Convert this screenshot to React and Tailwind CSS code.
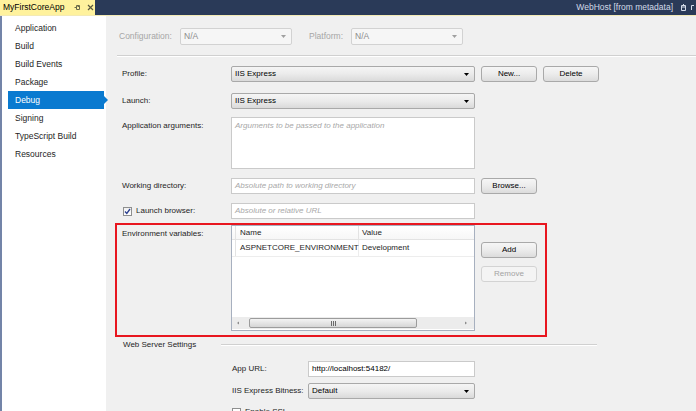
import React from "react";

function Caret({ gray }) {
  return (
    <svg width="5" height="3" viewBox="0 0 5 3" className="shrink-0">
      <path d="M0 0H5L2.5 3Z" fill={gray ? "#a0a0a0" : "#000"} />
    </svg>
  );
}

function Select({ text, w = "w-[244px]" }) {
  return (
    <div className={`${w} h-[16px] flex items-center justify-between rounded-[2px] border border-[#a9a9a9] bg-linear-to-b from-[#f5f5f5] via-[#ebebeb] to-[#dadada] pl-[3px] pr-[5px] text-[8px] text-black`}>
      <span>{text}</span>
      <Caret />
    </div>
  );
}

function DisSelect({ text }) {
  return (
    <div className="w-[112px] h-[17px] flex items-center justify-between rounded-[2px] border border-[#d2d2d2] bg-[#f6f6f6] pl-[3px] pr-[5px] text-[8.5px] text-[#8c8c8c]">
      <span>{text}</span>
      <Caret gray />
    </div>
  );
}

function Button({ children, disabled, className = "" }) {
  return (
    <div
      className={`w-[56px] h-[16px] flex items-center justify-center rounded-[3px] border text-[8px] ${
        disabled
          ? "border-[#d3d3d3] bg-[#f4f4f4] text-[#a3a3a3]"
          : "border-[#a9a9a9] bg-linear-to-b from-[#f6f6f6] via-[#ececec] to-[#dcdcdc] text-black"
      } ${className}`}
    >
      {children}
    </div>
  );
}

function Input({ text, placeholder, h = "h-[16px]", w = "w-[244px]", top }) {
  return (
    <div
      className={`${w} ${h} flex ${top ? "items-start pt-[2px]" : "items-center"} bg-white border border-[#cacaca] pl-[3px] text-[8px] ${
        placeholder ? "italic text-[#a8a8a8]" : "text-black"
      }`}
    >
      {text}
    </div>
  );
}

function Checkbox() {
  return (
    <div className="w-[9px] h-[9px] border border-[#8e8f8f] bg-linear-to-b from-[#f0f0f0] to-white flex items-center justify-center shrink-0">
      <svg width="7" height="7" viewBox="0 0 7 7">
        <path d="M1 3.5L2.8 5.5L6 1" stroke="#2b3f8f" strokeWidth="1.3" fill="none" />
      </svg>
    </div>
  );
}

const navItems = ["Application", "Build", "Build Events", "Package", "Debug", "Signing", "TypeScript Build", "Resources"];

export default function App() {
  return (
    <div className="w-[696px] h-[411px] overflow-hidden flex flex-col bg-[#f0f0f0] font-['Liberation_Sans',Arial,sans-serif] text-[#1e1e1e]">
      {/* title / tab strip */}
      <div className="h-[15px] bg-[#2a3a58] flex items-stretch shrink-0">
        <div className="w-[95px] bg-[#fff29d] flex items-center pl-[3px] text-[8.5px] text-black">
          <span>MyFirstCoreApp</span>
          <svg width="7" height="7" viewBox="0 0 7 7" className="ml-[10px]">
            <path d="M0.5 3.5H2.5M2.5 1.5V5.5H5.5V1.5H2.5M3.5 2.5H6" stroke="#6a6a4a" strokeWidth="1" fill="none" />
          </svg>
          <svg width="7" height="7" viewBox="0 0 7 7" className="ml-[6px]">
            <path d="M1 1L6 6M6 1L1 6" stroke="#5a5a40" strokeWidth="1.2" />
          </svg>
        </div>
        <div className="flex-1" />
        <div className="flex items-center text-[8.5px] text-[#d4dbe8] pr-[2px]">
          <span>WebHost [from metadata]</span>
          <svg width="5" height="7" viewBox="0 0 5 7" className="ml-[8px]">
            <path d="M0.5 1.5H4.5V6.5H0.5ZM0.5 3H4.5M2.5 0V1.5" stroke="#d4dbe8" strokeWidth="1" fill="none" />
          </svg>
          <svg width="3" height="7" viewBox="0 0 3 7" className="ml-[5px]">
            <path d="M0.5 1.5H3M0.5 1.5V6" stroke="#d4dbe8" strokeWidth="1" fill="none" />
          </svg>
        </div>
      </div>
      <div className="h-[1px] bg-[#f3eab5] shrink-0" />

      <div className="flex flex-1 min-h-0">
        {/* sidebar */}
        <div className="w-[106px] shrink-0 bg-white border-l-2 border-[#7384a8] pt-[3px] flex flex-col text-[8.5px]">
          {navItems.map((n) =>
            n === "Debug" ? (
              <div key={n} className="relative h-[18px] ml-[6px] w-[96px] pl-[7px] flex items-center bg-[#0a7ad0] text-white">
                {n}
                <div className="absolute left-[96px] top-[5px] w-0 h-0 border-y-[4px] border-y-transparent border-l-[4px] border-l-[#0a7ad0]" />
              </div>
            ) : (
              <div key={n} className="h-[18px] pl-[13px] flex items-center">
                {n}
              </div>
            )
          )}
        </div>

        {/* main */}
        <div className="flex-1 min-w-0 pl-[9px] flex flex-col">
          {/* configuration row */}
          <div className="mt-[12px] pl-[4px] flex items-center text-[8.5px] text-[#a6a6a6]">
            <span className="w-[61px]">Configuration:</span>
            <DisSelect text="N/A" />
            <span className="ml-[17px] w-[42px]">Platform:</span>
            <DisSelect text="N/A" />
          </div>
          <div className="mt-[10px] ml-[2px] h-[2px] border-t border-[#d0d0d0] border-b border-b-white" />

          <div className="text-[8px]">
            {/* profile */}
            <div className="mt-[9px] pl-[7px] flex items-center">
              <span className="w-[109px]">Profile:</span>
              <Select text="IIS Express" />
              <Button className="ml-[6px]">New...</Button>
              <Button className="ml-[6px] w-[55px]">Delete</Button>
            </div>
            {/* launch */}
            <div className="mt-[11px] pl-[7px] flex items-center">
              <span className="w-[109px]">Launch:</span>
              <Select text="IIS Express" />
            </div>
            {/* app args */}
            <div className="mt-[8px] pl-[7px] flex items-start">
              <span className="w-[109px] pt-[3px]">Application arguments:</span>
              <Input h="h-[52px]" top placeholder text="Arguments to be passed to the application" />
            </div>
            {/* working dir */}
            <div className="mt-[9px] pl-[7px] flex items-center">
              <span className="w-[109px]">Working directory:</span>
              <Input placeholder text="Absolute path to working directory" />
              <Button className="ml-[6px]">Browse...</Button>
            </div>
            {/* launch browser */}
            <div className="mt-[9px] pl-[8px] flex items-center">
              <div className="w-[108px] flex items-center">
                <Checkbox />
                <span className="ml-[4px]">Launch browser:</span>
              </div>
              <Input placeholder text="Absolute or relative URL" />
            </div>

            {/* environment variables (highlighted) */}
            <div className="mt-[4px] w-[432px] h-[114px] border-2 border-[#e8161f] pl-[5px] flex items-start">
              <span className="w-[109px] pt-[3px]">Environment variables:</span>
              <div className="w-[244px] h-[106px] bg-white border border-[#a7b0bf] flex flex-col">
                <div className="h-[14px] flex border-b border-[#e3e3e3] bg-linear-to-b from-white to-[#f7f7f7]">
                  <div className="w-[4px] border-r border-[#e3e3e3]" />
                  <div className="w-[123px] pl-[4px] flex items-center border-r border-[#e3e3e3]">Name</div>
                  <div className="flex-1 pl-[3px] flex items-center">Value</div>
                </div>
                <div className="h-[17px] flex border-b border-[#ededed]">
                  <div className="w-[4px] border-r border-[#e3e3e3]" />
                  <div className="w-[123px] pl-[4px] flex items-center border-r border-[#ededed]">ASPNETCORE_ENVIRONMENT</div>
                  <div className="flex-1 pl-[3px] flex items-center">Development</div>
                </div>
                <div className="flex-1" />
                <div className="h-[12px] mb-[1px] bg-[#ececec] flex items-center px-[2px]">
                  <svg width="6" height="6" viewBox="0 0 6 6" className="ml-[1px]">
                    <path d="M4 1.5V4.5L2 3Z" fill="#8a8a8a" />
                  </svg>
                  <div className="ml-[8px] w-[168px] h-[10px] rounded-[2px] border border-[#9c9c9c] bg-linear-to-b from-[#f3f3f3] to-[#d6d6d6] flex items-center justify-center">
                    <div className="flex gap-[1px]">
                      <div className="w-[1px] h-[5px] bg-[#6a6a6a]" />
                      <div className="w-[1px] h-[5px] bg-[#6a6a6a]" />
                      <div className="w-[1px] h-[5px] bg-[#6a6a6a]" />
                    </div>
                  </div>
                  <div className="flex-1" />
                  <svg width="6" height="6" viewBox="0 0 6 6" className="mr-[3px]">
                    <path d="M2 1.5V4.5L4 3Z" fill="#8a8a8a" />
                  </svg>
                </div>
              </div>
              <div className="ml-[6px] mt-[17px] flex flex-col gap-[8px]">
                <Button>Add</Button>
                <Button disabled>Remove</Button>
              </div>
            </div>

            {/* web server settings */}
            <div className="mt-[3px] h-[10px] pl-[8px] flex items-center">
              <span className="w-[98px]">Web Server Settings</span>
              <div className="w-[376px] h-[2px] border-t border-[#d0d0d0] border-b border-b-white" />
            </div>
            <div className="mt-[11px] pl-[117px] flex items-center">
              <span className="w-[76px]">App URL:</span>
              <Input w="w-[167px]" text="http://localhost:54182/" />
            </div>
            <div className="mt-[6px] pl-[117px] flex items-center">
              <span className="w-[76px]">IIS Express Bitness:</span>
              <Select w="w-[167px]" text="Default" />
            </div>
            <div className="mt-[7px] pl-[117px] flex items-center">
              <div className="w-[9px] h-[9px] border border-[#8e8f8f] bg-white" />
              <span className="ml-[4px]">Enable SSL</span>
            </div>
          </div>
        </div>
      </div>
    </div>
  );
}
